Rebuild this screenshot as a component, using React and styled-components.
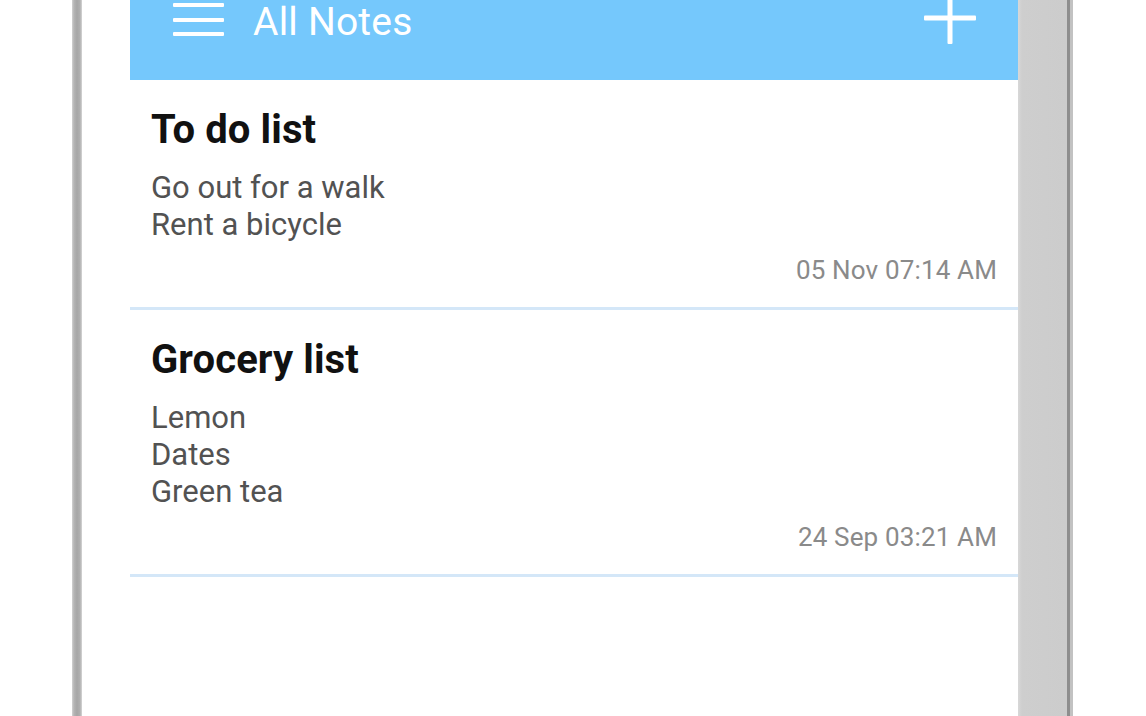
import styled, { createGlobalStyle } from "styled-components";

const GlobalStyle = createGlobalStyle`
  html, body {
    margin: 0;
    padding: 0;
    background: #ffffff;
    overflow: hidden;
  }
  body {
    font-family: Roboto, "Liberation Sans", Arial, sans-serif;
  }
`;

const notes = [
  {
    title: "To do list",
    lines: ["Go out for a walk", "Rent a bicycle"],
    date: "05 Nov 07:14 AM",
  },
  {
    title: "Grocery list",
    lines: ["Lemon", "Dates", "Green tea"],
    date: "24 Sep 03:21 AM",
  },
];

function App() {
  return (
    <>
      <GlobalStyle />
      <Page>
        <LeftEdge />
        <Bezel />
        <Screen>
          <Header>
            <Menu>
              <svg width="51" height="40" viewBox="0 0 51 40">
                <rect x="0" y="3" width="51" height="4" rx="1" fill="#ffffff" />
                <rect x="0" y="18" width="51" height="4" rx="1" fill="#ffffff" />
                <rect x="0" y="32" width="51" height="4" rx="1" fill="#ffffff" />
              </svg>
            </Menu>
            <Title>All Notes</Title>
            <Add>
              <svg width="52" height="46" viewBox="0 0 52 46">
                <rect x="0" y="17.5" width="52" height="5" rx="1" fill="#ffffff" />
                <rect x="23.5" y="0" width="5" height="46" rx="1" fill="#ffffff" />
              </svg>
            </Add>
          </Header>
          {notes.map((note) => (
            <Card key={note.title}>
              <NoteTitle>{note.title}</NoteTitle>
              <Body>
                {note.lines.map((line) => (
                  <div key={line}>{line}</div>
                ))}
              </Body>
              <Stamp>{note.date}</Stamp>
            </Card>
          ))}
        </Screen>
        <RightEdge />
      </Page>
    </>
  );
}

const Page = styled.div`
  display: flex;
  height: 716px;
  padding-left: 72px;
  box-sizing: border-box;
  overflow: hidden;
`;

const LeftEdge = styled.div`
  width: 10px;
  background: linear-gradient(
    to right,
    #d2d2d2 0px,
    #b4b4b4 2px,
    #a6a6a6 5px,
    #b0b0b0 8px,
    #d6d6d6 10px
  );
`;

const Bezel = styled.div`
  width: 48px;
  background: #ffffff;
`;

const Screen = styled.div`
  width: 888px;
  display: flex;
  flex-direction: column;
  background: #ffffff;
`;

const Header = styled.div`
  height: 80px;
  background: #75c8fc;
  display: flex;
  align-items: flex-start;
  padding: 0 42px 0 43px;
  box-sizing: border-box;
`;

const Menu = styled.div`
  width: 51px;
  height: 40px;
  margin-right: 29px;
  svg {
    display: block;
  }
`;

const Title = styled.div`
  flex: 1;
  color: #ffffff;
  font-size: 39px;
  line-height: 44px;
  letter-spacing: 0.2px;
`;

const Add = styled.div`
  height: 46px;
  margin-top: -2px;
  svg {
    display: block;
  }
`;

const Card = styled.div`
  padding: 27px 21px 22px;
  border-bottom: 3px solid #d4e7f8;
  display: flex;
  flex-direction: column;
`;

const NoteTitle = styled.div`
  font-size: 40px;
  line-height: 46px;
  font-weight: 700;
  color: #111111;
  letter-spacing: 0.1px;
`;

const Body = styled.div`
  margin-top: 16px;
  font-size: 31px;
  line-height: 37px;
  color: #525252;
`;

const Stamp = styled.div`
  margin-top: 12px;
  align-self: flex-end;
  font-size: 26px;
  line-height: 30px;
  letter-spacing: 0.15px;
  color: #8a8a8a;
`;

const RightEdge = styled.div`
  width: 49px;
  background: linear-gradient(to right, #d8d8d8 0px, #cecece 4px, #cccccc 100%);
  border-right: 3px solid #8e8e8e;
  box-shadow: 3px 0 0 #c2c2c2;
`;

export default App;
